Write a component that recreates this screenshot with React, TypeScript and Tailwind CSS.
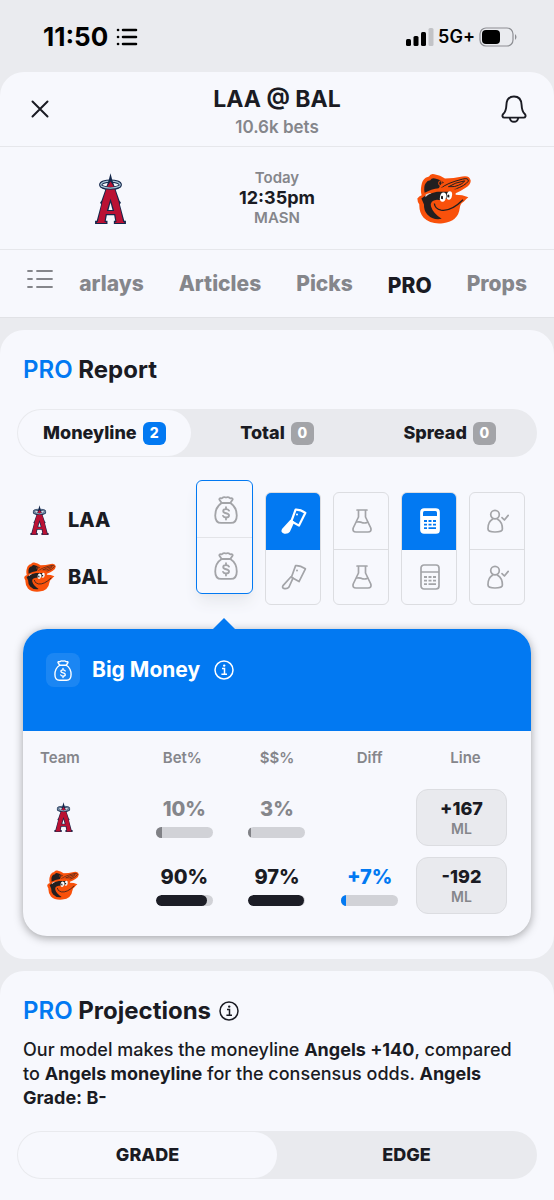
import { useState } from 'react';
import type { ReactNode } from 'react';

type IconProps = { active?: boolean };

const AngelsLogo = ({ className }: { className: string }) => (
  <svg viewBox="0 0 92 152" className={className} role="img" aria-label="Los Angeles Angels">
    <ellipse cx="46" cy="35" rx="29" ry="11" fill="none" stroke="#14274b" strokeWidth="10" />
    <ellipse cx="46" cy="35" rx="29" ry="11" fill="none" stroke="#a9c6d8" strokeWidth="4" />
    <path d="M46 1 L51 20 L73 83 L77 88 L74 94 L87 142 H92 V152 H56 V142 L60 142 L57 126 H35 L32 142 H37 V152 H0 V142 L5 142 L18 94 L15 88 L19 83 L41 20 Z" fill="#14274b" />
    <path d="M46 25 L56 41 L70 85 L84 146 H87 V149 H60 V146 H64 L60 122 H32 L28 146 H33 V149 H5 V146 H8 L22 85 L36 41 Z" fill="#ba1133" />
    <path d="M46 76 L57 113 H35 Z" fill="#14274b" />
    <path d="M46 88 L52 110 H40 Z" fill="#f7f8fd" />
    <path d="M18 40 Q45 52 74 40" fill="none" stroke="#14274b" strokeWidth="8" />
    <path d="M18 39 Q45 51 74 39" fill="none" stroke="#a9c6d8" strokeWidth="4" />
  </svg>
);

const OriolesLogo = ({ className }: { className: string }) => (
  <svg viewBox="14 14 162 152" className={className} role="img" aria-label="Baltimore Orioles">
    <path d="M40 28 L50 24 Q54 14 66 17 Q84 20 98 30 Q124 30 150 24 Q172 20 175 36 Q176 48 160 58 Q146 68 130 74 V79 Q150 79 168 86 Q160 92 154 100 Q144 104 142 120 Q138 158 92 164 Q54 168 34 148 Q20 132 21 108 Q15 100 15 90 Q20 82 28 80 Q24 68 27 52 Q29 36 40 28 Z" fill="#f9510b" />
    <path d="M37 73 Q33 54 40 44 Q45 35 54 35 Q58 27 68 30 Q86 34 95 43 Q84 46 80 59 Q56 61 37 73 Z" fill="#231f20" />
    <path d="M27 90 Q44 76 74 70 L116 70 L117 83 Q96 96 74 94 Q52 96 56 114 Q62 134 88 151 Q62 156 45 138 Q34 126 35 108 Q30 96 27 90 Z" fill="#231f20" />
    <path d="M85 60 Q102 44 150 32 Q169 27 168 38 Q158 52 128 62 Q106 60 85 60 Z" fill="#f9510b" stroke="#231f20" strokeWidth="3" />
    <path d="M108 55 Q128 42 157 37 Q152 47 127 54 Z" fill="#f9510b" stroke="#231f20" strokeWidth="3" />
    <path d="M80 58 Q108 53 135 61 Q120 68 106 66 Q92 64 74 68 Z" fill="#f9510b" />
    <ellipse cx="84" cy="44" rx="5" ry="7" fill="none" stroke="#f9510b" strokeWidth="3" />
    <path d="M67 101 Q86 93 109 99 Q126 95 138 87 L158 89 Q146 108 128 119 Q102 130 82 120 Q72 114 67 101 Z" fill="#f9510b" />
    <path d="M66 105 Q68 121 86 125 Q116 130 152 94" fill="none" stroke="#231f20" strokeWidth="4" />
    <ellipse cx="92" cy="86" rx="9" ry="14" transform="rotate(12 92 86)" fill="white" />
    <ellipse cx="111" cy="81" rx="8" ry="13" transform="rotate(12 111 81)" fill="white" />
    <path d="M86 91 V84 Q89 80 92 84 V92 Z M105 86 V80 Q108 76 111 80 V87 Z" fill="#231f20" />
    <path d="M40 78 Q50 72 57 74 Q47 77 39 86" fill="#d9d9dc" />
  </svg>
);

const MoneyBagIcon = ({ className = 'w-6 h-7' }: { className?: string }) => (
  <svg viewBox="0 0 22 26" className={className} fill="none" stroke="currentColor" strokeWidth="1.7" strokeLinecap="round" strokeLinejoin="round">
    <path d="M7 6.5 L4.8 3.2 Q4.8 1.6 7 2.2 Q9 .5 11 1.4 Q13 .5 15 2.2 Q17.2 1.6 17.2 3.2 L15 6.5 Z" />
    <path d="M7 6.5 C3 9 1 13.5 1 18 C1 23 2.6 25 6.5 25 H15.5 C19.4 25 21 23 21 18 C21 13.5 19 9 15 6.5" />
    <path d="M13.8 13.6 Q13.2 12.2 11 12.2 Q8.4 12.2 8.4 14 Q8.4 15.6 11 16 Q13.8 16.5 13.8 18.2 Q13.8 20 11 20 Q8.7 20 8.2 18.4 M11 10.4 V12.2 M11 20 V21.8" />
  </svg>
);

const CleaverIcon = ({ active }: IconProps) => (
  <svg viewBox="0 0 26 26" className="size-[26px]" fill="none" stroke="currentColor" strokeWidth={active ? 2.2 : 1.7} strokeLinecap="round" strokeLinejoin="round">
    <path d="M14.6 1.6 Q19 1.2 24.4 4.8 L18 17.6 L10.4 13.2 Z" />
    <path d="M10 12.8 L2 21.6 Q.6 24 3.6 24.6 Q6.6 25 8 23 L12 14.2 Z" fill={active ? 'currentColor' : 'none'} />
    <circle cx="16" cy="6.4" r="1" fill="currentColor" stroke="none" />
  </svg>
);

const FlaskIcon = () => (
  <svg viewBox="0 0 20 24" className="w-5 h-6" fill="none" stroke="currentColor" strokeWidth="1.7" strokeLinecap="round" strokeLinejoin="round">
    <path d="M5 1 H15 M6.5 1 V8 L1.2 19 Q.2 23 4 23 H16 Q19.8 23 18.8 19 L13.5 8 V1" />
    <path d="M4.8 13 Q8 12.4 10 13.6 Q12.6 14.6 15.6 13.2" />
  </svg>
);

const CalculatorIcon = ({ active }: IconProps) => (
  <svg viewBox="0 0 20 26" className="w-5 h-[26px]" fill="none" stroke="currentColor" strokeWidth="1.7">
    <rect x="1" y="1" width="18" height="24" rx="3" fill={active ? 'currentColor' : 'none'} />
    {active ? <path d="M3 4.5 Q3 3 4.5 3 H15.5 Q17 3 17 4.5 V8 H3 Z" fill="#0279f2" stroke="none" /> : <path d="M1 8 H19" />}
    <path
      d="M4 13 H7 M8.5 13 H11.5 M13 13 H16 M4 16.6 H7 M8.5 16.6 H11.5 M13 16.6 H16 M4 20.2 H7 M8.5 20.2 H16"
      stroke={active ? '#0279f2' : 'currentColor'}
      strokeWidth="1.8"
    />
  </svg>
);

const UserCheckIcon = () => (
  <svg viewBox="0 0 22 24" className="w-[22px] h-6" fill="none" stroke="currentColor" strokeWidth="1.7" strokeLinecap="round" strokeLinejoin="round">
    <circle cx="8" cy="5.6" r="4.3" />
    <path d="M5.4 10.2 Q.8 13 1 20 Q1 23 8 23 Q15.4 23 15.4 20 Q15.4 13 10.6 10.2" />
    <path d="M15 8.6 L17.4 11 L21.2 6.4" />
  </svg>
);

const InfoIcon = () => (
  <svg viewBox="0 0 20 20" className="size-5" fill="none" stroke="currentColor" strokeWidth="1.5">
    <circle cx="10" cy="10" r="9" />
    <path d="M8 8.4 H10.5 V14 M7.4 14.2 H13" />
    <circle cx="10.2" cy="5.6" r="1.2" fill="currentColor" stroke="none" />
  </svg>
);

const tabs = ['arlays', 'Articles', 'Picks', 'PRO', 'Props'];

const markets = [
  { name: 'Moneyline', count: 2 },
  { name: 'Total', count: 0 },
  { name: 'Spread', count: 0 },
];

const teams = [
  { code: 'LAA', logo: <AngelsLogo className="w-[19px] h-[30px]" /> },
  { code: 'BAL', logo: <OriolesLogo className="w-8 h-[30px]" /> },
];

const signals: { name: string; active: boolean; icon: (active: boolean) => ReactNode }[] = [
  { name: 'Sharp Action', active: true, icon: (active) => <CleaverIcon active={active} /> },
  { name: 'Systems', active: false, icon: () => <FlaskIcon /> },
  { name: 'Projections', active: true, icon: (active) => <CalculatorIcon active={active} /> },
  { name: 'Top Experts', active: false, icon: () => <UserCheckIcon /> },
];

const Stat = ({ value, percent, text, bar }: { value: string; percent: number; text: string; bar: string }) => (
  <div className="flex flex-col items-center gap-1.5">
    <span className={`text-xl leading-6 font-extrabold ${text}`}>{value}</span>
    <div className="w-[57px] h-[11px] rounded-full bg-[#d1d2d7] overflow-hidden">
      <div className={`h-full ${bar}`} style={{ width: `${percent}%` }}></div>
    </div>
  </div>
);

const LineButton = ({ odds }: { odds: string }) => (
  <button className="w-[91px] h-[57px] pt-1 rounded-xl border border-[#dcdde1] bg-[#e9eaee] flex flex-col items-center justify-center">
    <span className="text-lg leading-5 font-extrabold">{odds}</span>
    <span className="text-sm leading-5 font-semibold text-[#85868b]">ML</span>
  </button>
);

const StatusBar = () => (
  <div className="h-[72px] pl-[43px] pr-[37px] pt-0.5 flex items-center justify-between text-black">
    <div className="flex items-center gap-2">
      <span className="text-[26px] leading-8 font-bold">11:50</span>
      <svg viewBox="0 0 22 18" className="w-[22px] h-[18px]" stroke="currentColor" strokeWidth="2.6" strokeLinecap="round">
        <path d="M7 2 H20 M7 9 H20 M7 16 H20 M2 2 H2.1 M2 9 H2.1 M2 16 H2.1" />
      </svg>
    </div>
    <div className="flex items-center gap-1">
      <svg viewBox="0 0 28 18" className="w-7 h-[18px]" fill="currentColor">
        <rect x="0" y="11" width="5" height="7" rx="1.5" />
        <rect x="7.5" y="8" width="5" height="10" rx="1.5" />
        <rect x="15" y="4" width="5" height="14" rx="1.5" />
        <rect x="22.5" y="0" width="5" height="18" rx="1.5" fill="#c2c3c7" />
      </svg>
      <span className="text-lg font-semibold">5G+</span>
      <svg viewBox="0 0 38 20" className="w-[38px] h-5">
        <rect x="1" y="1" width="33" height="18" rx="6" fill="none" stroke="#8d8e93" strokeWidth="1.2" />
        <rect x="3" y="3" width="18" height="14" rx="4" fill="#000" />
        <path d="M36 7 Q39 10 36 13 Z" fill="#8d8e93" />
      </svg>
    </div>
  </div>
);

const App = () => {
  const [tab, setTab] = useState('PRO');
  const [market, setMarket] = useState('Moneyline');
  const [view, setView] = useState('GRADE');

  return (
    <div className="min-h-screen flex flex-col bg-[#eaebef] text-[#1a1b23] font-['Inter',sans-serif]">
      <StatusBar />

      <section className="bg-[#f7f8fd] rounded-t-3xl">
        <header className="h-[75px] px-[27px] flex items-center justify-between border-b border-[#e6e7eb]">
          <button aria-label="Close" className="size-[26px] flex items-center justify-center">
            <svg viewBox="0 0 18 18" className="size-[18px]" stroke="currentColor" strokeWidth="2" strokeLinecap="round">
              <path d="M1.5 1.5 L16.5 16.5 M16.5 1.5 L1.5 16.5" />
            </svg>
          </button>
          <div className="text-center pt-1">
            <h1 className="text-[23px] leading-8 font-bold">LAA @ BAL</h1>
            <p className="text-[17px] leading-6 font-semibold text-[#85868b]">10.6k bets</p>
          </div>
          <button aria-label="Notifications" className="size-[26px] flex items-center justify-center">
            <svg viewBox="0 0 26 28" className="w-[26px] h-7 shrink-0" fill="none" stroke="currentColor" strokeWidth="1.9" strokeLinejoin="round">
              <path d="M13 1.5 C8 1.5 5.6 5 5.4 10 C5.2 15 4.4 17 2.2 19 C.8 20.6 1.4 22.6 3.4 22.6 H22.6 C24.6 22.6 25.2 20.6 23.8 19 C21.6 17 20.8 15 20.6 10 C20.4 5 18 1.5 13 1.5 Z" />
              <path d="M8.8 22.8 Q9.4 26.8 13 26.8 Q16.6 26.8 17.2 22.8" />
            </svg>
          </button>
        </header>

        <div className="h-[103px] px-[83px] flex items-center justify-between border-b border-[#e6e7eb]">
          <span className="w-[54px] flex justify-center">
            <AngelsLogo className="w-[31px] h-[51px]" />
          </span>
          <div className="text-center">
            <p className="text-[15px] leading-5 font-semibold text-[#85868b]">Today</p>
            <p className="text-lg leading-5 font-bold">12:35pm</p>
            <p className="text-[15px] leading-5 font-semibold text-[#85868b]">MASN</p>
          </div>
          <OriolesLogo className="w-[54px] h-[51px]" />
        </div>

        <nav className="h-[68px] px-[27px] flex items-center justify-between border-b border-[#e1e2e6]">
          <button aria-label="All sections" className="pb-2.5">
            <svg viewBox="0 0 26 20" className="w-[26px] h-5 text-[#85868b]" stroke="currentColor" strokeWidth="1.8" strokeLinecap="round">
              <path d="M1 2 H5 M10 2 H25 M1 10 H5 M10 10 H25 M1 18 H5 M10 18 H25" />
            </svg>
          </button>
          <div className="flex gap-[35px]">
            {tabs.map((name) => (
              <button
                key={name}
                onClick={() => setTab(name)}
                className={`text-[21px] leading-7 font-extrabold ${tab === name ? 'pt-1 text-[#1a1b23]' : 'text-[#85868b]'}`}
              >
                {name}
              </button>
            ))}
          </div>
        </nav>
      </section>

      <section className="mt-3 bg-[#f7f8fd] rounded-3xl pt-6 pb-[23px]">
        <h2 className="px-[23px] text-2xl leading-8 font-bold">
          <span className="text-[#0279f2] font-semibold">PRO</span> Report
        </h2>

        <div className="mt-[23px] mx-[17px] h-12 p-px rounded-full bg-[#e9eaee] grid grid-cols-3">
          {markets.map(({ name, count }) => (
            <button
              key={name}
              onClick={() => setMarket(name)}
              className={`rounded-full flex items-center justify-center gap-1.5 text-lg font-extrabold ${market === name ? 'bg-[#f7f8fd]' : ''}`}
            >
              {name}
              <span className={`size-[23px] rounded-md flex items-center justify-center text-sm text-white ${count > 0 ? 'bg-[#0279f2]' : 'bg-[#a3a4a8]'}`}>
                {count}
              </span>
            </button>
          ))}
        </div>

        <div className="mt-[23px] pl-[23px] pr-[29px] flex items-start justify-between">
          <div className="pt-[11px]">
            {teams.map(({ code, logo }) => (
              <div key={code} className="h-[57px] flex items-center gap-3">
                <span className="w-[33px] flex justify-center">{logo}</span>
                <span className="text-xl font-extrabold">{code}</span>
              </div>
            ))}
          </div>
          <div className="flex items-start gap-3 text-[#a3a4a8]">
            <button aria-label="Big Money" className="w-[57px] h-[114px] rounded-md border border-[#0279f2] shadow-lg shadow-gray-200 flex flex-col">
              <span className="flex-1 w-full pt-0.5 pl-0.5 flex items-center justify-center border-b border-[#e3e4e8]">
                <MoneyBagIcon />
              </span>
              <span className="flex-1 w-full pt-0.5 pl-0.5 flex items-center justify-center">
                <MoneyBagIcon />
              </span>
            </button>
            {signals.map(({ name, active, icon }) => (
              <button key={name} aria-label={name} className="mt-3 w-14 h-[113px] rounded-md border border-[#dcdde1] overflow-hidden flex flex-col">
                <span className={`h-[57px] w-full pl-0.5 flex items-center justify-center border-b ${active ? 'bg-[#0279f2] border-[#0279f2] text-white' : 'border-[#dcdde1]'}`}>
                  {icon(active)}
                </span>
                <span className="flex-1 w-full pl-0.5 flex items-center justify-center">{icon(false)}</span>
              </button>
            ))}
          </div>
        </div>

        <div className="relative mt-6 mx-[23px] pb-[17px] rounded-3xl shadow-[0_2px_10px_rgba(0,0,0,0.35)]">
          <svg viewBox="0 0 24 12" className="absolute -top-[11px] right-[295px] w-6 h-3">
            <path d="M0 12 L12 0 L24 12 Z" fill="#0279f2" />
          </svg>
          <div className="h-[102px] rounded-t-3xl bg-[#0279f2] text-white px-[23px] pt-6 flex items-start">
            <span className="size-[34px] rounded-lg bg-white/10 flex items-center justify-center">
              <MoneyBagIcon className="w-[18px] h-[21px]" />
            </span>
            <h3 className="ml-3 text-[21px] leading-[34px] font-bold">Big Money</h3>
            <button aria-label="About Big Money" className="ml-3.5 h-[34px] flex items-center">
              <InfoIcon />
            </button>
          </div>

          <table className="w-full table-fixed">
            <thead>
              <tr className="h-[52px] text-[15px] text-[#85868b]">
                <th className="w-[115px] pt-0.5 pl-[17px] text-left font-semibold">Team</th>
                <th className="pt-0.5 pr-1 font-semibold">Bet%</th>
                <th className="pt-0.5 font-semibold">$$%</th>
                <th className="pt-0.5 font-semibold">Diff</th>
                <th className="w-[115px] pt-0.5 pr-4 font-semibold">Line</th>
              </tr>
            </thead>
            <tbody>
              <tr className="h-[68px]">
                <td className="pl-6">
                  <span className="w-8 flex justify-center">
                    <AngelsLogo className="w-[19px] h-[30px]" />
                  </span>
                </td>
                <td><Stat value="10%" percent={10} text="text-[#85868b]" bar="bg-[#808186]" /></td>
                <td><Stat value="3%" percent={4} text="text-[#85868b]" bar="bg-[#808186]" /></td>
                <td></td>
                <td><LineButton odds="+167" /></td>
              </tr>
              <tr className="h-[68px]">
                <td className="pl-6"><OriolesLogo className="w-8 h-[30px]" /></td>
                <td><Stat value="90%" percent={90} text="" bar="bg-[#1c1d26] rounded-full" /></td>
                <td><Stat value="97%" percent={97} text="" bar="bg-[#1c1d26] rounded-full" /></td>
                <td><Stat value="+7%" percent={8} text="text-[#0279f2]" bar="bg-[#0279f2]" /></td>
                <td><LineButton odds="-192" /></td>
              </tr>
            </tbody>
          </table>
        </div>
      </section>

      <section className="mt-3 flex-1 bg-[#f7f8fd] rounded-t-3xl pt-6 pb-5">
        <div className="px-[23px]">
          <div className="flex items-center gap-2">
            <h2 className="text-2xl leading-8 font-bold">
              <span className="text-[#0279f2] font-semibold">PRO</span> Projections
            </h2>
            <button aria-label="About PRO Projections">
              <InfoIcon />
            </button>
          </div>
          <p className="mt-[11px] text-lg leading-6 font-medium">
            Our model makes the moneyline <b>Angels +140</b>, compared to <b>Angels moneyline</b> for the consensus odds. <b>Angels Grade: B-</b>
          </p>
        </div>
        <div className="mt-[21px] mx-[17px] h-12 p-px rounded-full bg-[#e9eaee] grid grid-cols-2">
          {['GRADE', 'EDGE'].map((name) => (
            <button
              key={name}
              onClick={() => setView(name)}
              className={`rounded-full text-lg font-extrabold ${view === name ? 'bg-[#f7f8fd]' : ''}`}
            >
              {name}
            </button>
          ))}
        </div>
      </section>
    </div>
  );
};

export default App;
